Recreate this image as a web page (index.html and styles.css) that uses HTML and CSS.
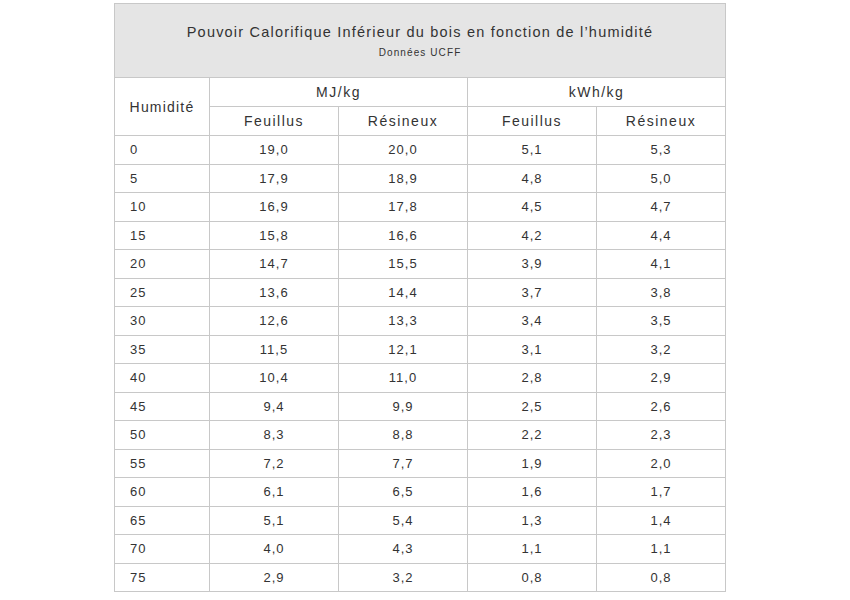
FILE: index.html
```html
<!DOCTYPE html>
<html lang="fr">
<head>
<meta charset="utf-8">
<title>PCI du bois</title>
<link rel="stylesheet" href="styles.css">
</head>
<body>
<div class="page">
<table class="pci">
<colgroup>
<col class="c-hum"><col class="c-val"><col class="c-val"><col class="c-val"><col class="c-val">
</colgroup>
<thead>
<tr class="r-title"><th colspan="5"><div class="title">Pouvoir Calorifique Inférieur du bois en fonction de l’humidité</div><div class="subtitle">Données UCFF</div></th></tr>
<tr class="r-head"><th rowspan="2" class="h-hum">Humidité</th><th colspan="2">MJ/kg</th><th colspan="2">kWh/kg</th></tr>
<tr class="r-head"><th>Feuillus</th><th>Résineux</th><th>Feuillus</th><th>Résineux</th></tr>
</thead>
<tbody>
<tr><td>0</td><td>19,0</td><td>20,0</td><td>5,1</td><td>5,3</td></tr>
<tr><td>5</td><td>17,9</td><td>18,9</td><td>4,8</td><td>5,0</td></tr>
<tr><td>10</td><td>16,9</td><td>17,8</td><td>4,5</td><td>4,7</td></tr>
<tr><td>15</td><td>15,8</td><td>16,6</td><td>4,2</td><td>4,4</td></tr>
<tr><td>20</td><td>14,7</td><td>15,5</td><td>3,9</td><td>4,1</td></tr>
<tr><td>25</td><td>13,6</td><td>14,4</td><td>3,7</td><td>3,8</td></tr>
<tr><td>30</td><td>12,6</td><td>13,3</td><td>3,4</td><td>3,5</td></tr>
<tr><td>35</td><td>11,5</td><td>12,1</td><td>3,1</td><td>3,2</td></tr>
<tr><td>40</td><td>10,4</td><td>11,0</td><td>2,8</td><td>2,9</td></tr>
<tr><td>45</td><td>9,4</td><td>9,9</td><td>2,5</td><td>2,6</td></tr>
<tr><td>50</td><td>8,3</td><td>8,8</td><td>2,2</td><td>2,3</td></tr>
<tr><td>55</td><td>7,2</td><td>7,7</td><td>1,9</td><td>2,0</td></tr>
<tr><td>60</td><td>6,1</td><td>6,5</td><td>1,6</td><td>1,7</td></tr>
<tr><td>65</td><td>5,1</td><td>5,4</td><td>1,3</td><td>1,4</td></tr>
<tr><td>70</td><td>4,0</td><td>4,3</td><td>1,1</td><td>1,1</td></tr>
<tr><td>75</td><td>2,9</td><td>3,2</td><td>0,8</td><td>0,8</td></tr>
</tbody>
</table>
</div>
</body>
</html>
```
FILE: styles.css
```css
html, body {
  margin: 0;
  padding: 0;
  background: #ffffff;
}
.page {
  padding: 3px 0 0 114px;
}
.pci {
  border-collapse: collapse;
  table-layout: fixed;
  width: 611px;
  font-family: "Liberation Sans", Arial, sans-serif;
  color: #333333;
  font-size: 13px;
  letter-spacing: 1px;
}
.c-hum { width: 95px; }
.c-val { width: 129px; }
.pci th, .pci td {
  border: 1px solid #c8c8c8;
  padding: 0;
  font-weight: normal;
  text-align: center;
  vertical-align: middle;
}
.r-title th {
  background: #e5e5e5;
  height: 73px;
}
.title {
  font-size: 14.5px;
  letter-spacing: 1.2px;
  line-height: 18px;
  padding-top: 1px;
}
.subtitle {
  font-size: 10px;
  letter-spacing: 1.1px;
  line-height: 14px;
  margin-top: 5px;
}
.r-head th {
  height: 28px;
  font-size: 14px;
  letter-spacing: 1.5px;
}
.r-head th.h-hum {
  letter-spacing: 1.2px;
}
.pci tbody tr {
  height: 28.5px;
}
.pci tbody td:first-child {
  text-align: left;
  padding-left: 15px;
}
```
